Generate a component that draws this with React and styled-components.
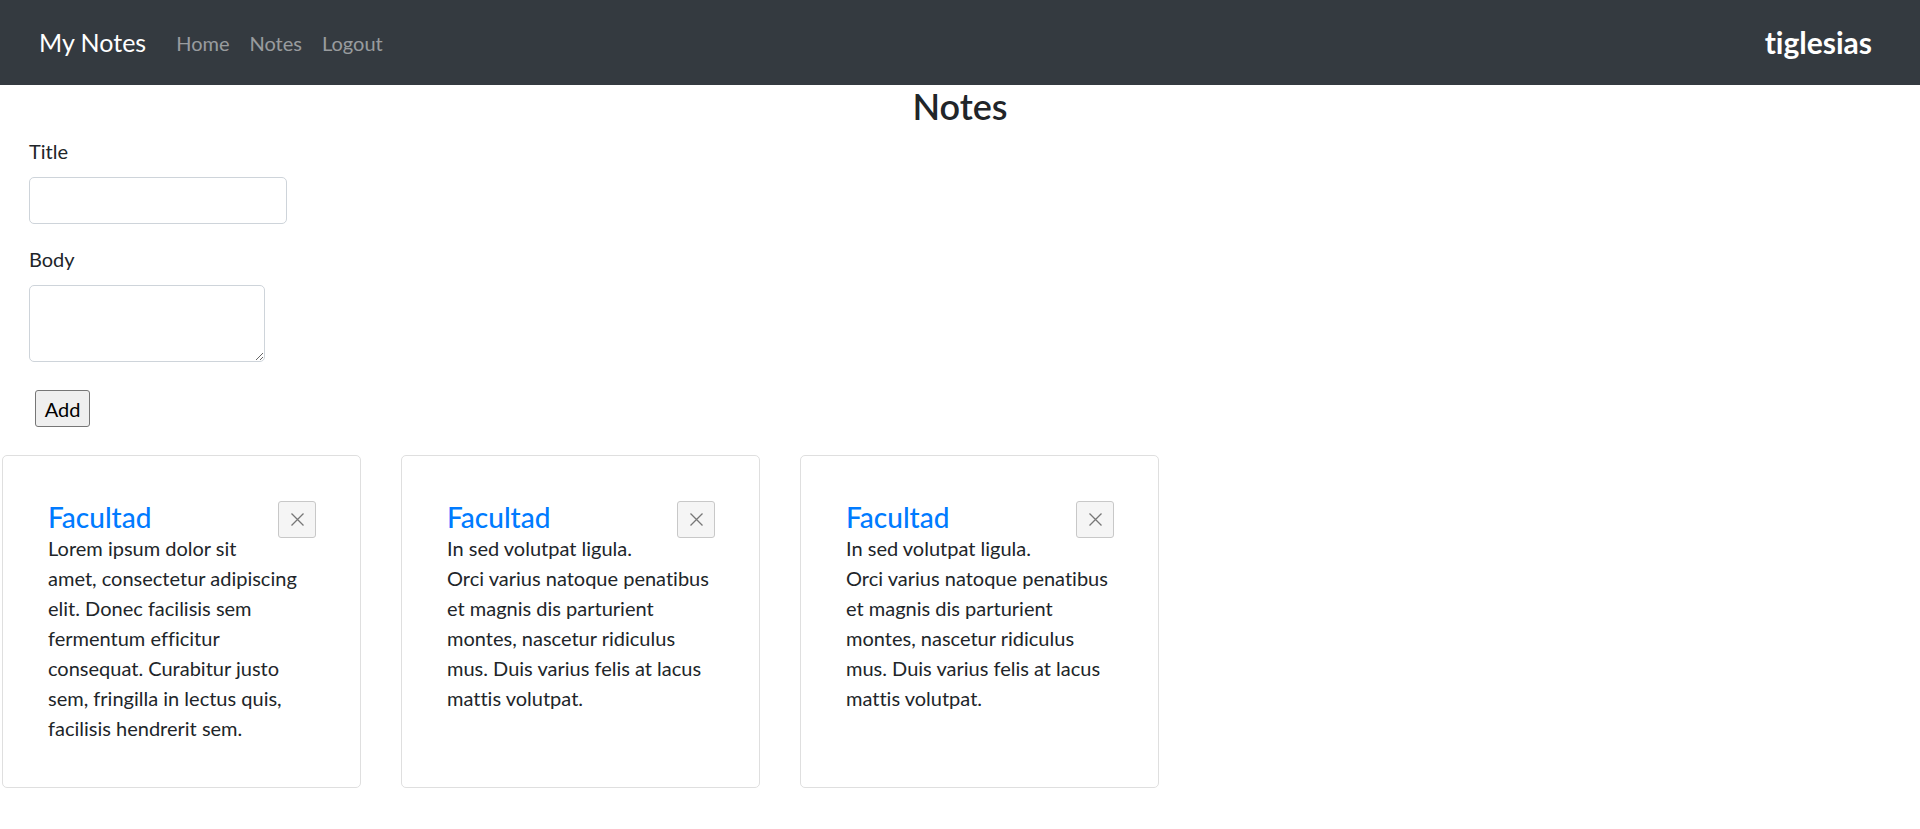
import React from "react";
import styled, { createGlobalStyle } from "styled-components";

const GlobalStyle = createGlobalStyle`
  * { box-sizing: border-box; }
  body {
    margin: 0;
    font-family: Lato, "Open Sans", sans-serif;
    font-size: 20px;
    line-height: 1.5;
    color: #212529;
    background: #fff;
    font-variant-ligatures: none;
  }
`;

const NavBar = styled.nav`
  height: 85px;
  background: #343a40;
  display: flex;
  align-items: center;
  justify-content: space-between;
  padding: 0 48px 0 39px;
`;

const NavLeft = styled.div`
  display: flex;
  align-items: center;
`;

const Brand = styled.a`
  color: #fff;
  font-size: 25px;
  margin-right: 30px;
  text-decoration: none;
`;

const NavLinks = styled.div`
  display: flex;
  gap: 20px;
`;

const NavLink = styled.a`
  color: rgba(255, 255, 255, 0.5);
  font-size: 20px;
  text-decoration: none;
`;

const User = styled.span`
  color: #fff;
  font-size: 30px;
  font-weight: 700;
`;

const Heading = styled.h2`
  margin: 0 0 8px;
  text-align: center;
  font-size: 36px;
  font-weight: 600;
  line-height: 1.2;
`;

const Form = styled.form`
  padding: 0 29px;
`;

const Group = styled.div`
  margin-bottom: 20px;
`;

const Label = styled.label`
  display: block;
  margin-bottom: 11px;
`;

const Input = styled.input`
  display: block;
  width: 258px;
  height: 47px;
  border: 1px solid #ced4da;
  border-radius: 5px;
  font: inherit;
  padding: 7px 15px;
`;

const TextArea = styled.textarea`
  display: block;
  width: 236px;
  height: 77px;
  border: 1px solid #ced4da;
  border-radius: 5px;
  font: inherit;
`;

const AddButton = styled.button`
  margin: 8px 0 0 6px;
  width: 55px;
  height: 37px;
  padding: 0;
  font-family: inherit;
  font-size: 20px;
  color: #000;
  background: #efefef;
  border: 1px solid #767676;
  border-radius: 3px;
`;

const CardRow = styled.div`
  display: flex;
  align-items: stretch;
  gap: 40px;
  padding: 28px 0 0 2px;
`;

const Card = styled.div`
  width: 359px;
  height: 333px;
  border: 1px solid #dfdfdf;
  border-radius: 5px;
  padding: 45px 44px 40px 45px;
`;

const CardHead = styled.div`
  display: flex;
  justify-content: space-between;
  align-items: flex-start;
  height: 32px;
`;

const CardTitle = styled.h5`
  margin: 0;
  color: #007bff;
  font-size: 28px;
  font-weight: 500;
  line-height: 32px;
`;

const CloseButton = styled.button`
  flex: none;
  width: 38px;
  height: 37px;
  padding: 0;
  display: flex;
  align-items: center;
  justify-content: center;
  background: #f5f5f5;
  border: 1px solid #c8c8c8;
  border-radius: 3px;
`;

const CardText = styled.p`
  margin: 0;
  white-space: pre;
`;

const notes = [
  {
    title: "Facultad",
    lines: [
      "Lorem ipsum dolor sit",
      "amet, consectetur adipiscing",
      "elit. Donec facilisis sem",
      "fermentum efficitur",
      "consequat. Curabitur justo",
      "sem, fringilla in lectus quis,",
      "facilisis hendrerit sem.",
    ],
  },
  {
    title: "Facultad",
    lines: [
      "In sed volutpat ligula.",
      "Orci varius natoque penatibus",
      "et magnis dis parturient",
      "montes, nascetur ridiculus",
      "mus. Duis varius felis at lacus",
      "mattis volutpat.",
    ],
  },
  {
    title: "Facultad",
    lines: [
      "In sed volutpat ligula.",
      "Orci varius natoque penatibus",
      "et magnis dis parturient",
      "montes, nascetur ridiculus",
      "mus. Duis varius felis at lacus",
      "mattis volutpat.",
    ],
  },
];

function CloseIcon() {
  return (
    <svg width="15" height="15" viewBox="0 0 15 15">
      <path d="M1.5 1.5L13.5 13.5M13.5 1.5L1.5 13.5" stroke="#777" strokeWidth="1.3" />
    </svg>
  );
}

export default function App() {
  return (
    <>
      <GlobalStyle />
      <NavBar>
        <NavLeft>
          <Brand href="#">My Notes</Brand>
          <NavLinks>
            <NavLink href="#">Home</NavLink>
            <NavLink href="#">Notes</NavLink>
            <NavLink href="#">Logout</NavLink>
          </NavLinks>
        </NavLeft>
        <User>tiglesias</User>
      </NavBar>
      <Heading>Notes</Heading>
      <Form onSubmit={(e) => e.preventDefault()}>
        <Group>
          <Label>Title</Label>
          <Input type="text" />
        </Group>
        <Group>
          <Label>Body</Label>
          <TextArea />
        </Group>
        <AddButton type="submit">Add</AddButton>
      </Form>
      <CardRow>
        {notes.map((note, i) => (
          <Card key={i}>
            <CardHead>
              <CardTitle>{note.title}</CardTitle>
              <CloseButton>
                <CloseIcon />
              </CloseButton>
            </CardHead>
            <CardText>{note.lines.join("\n")}</CardText>
          </Card>
        ))}
      </CardRow>
    </>
  );
}
